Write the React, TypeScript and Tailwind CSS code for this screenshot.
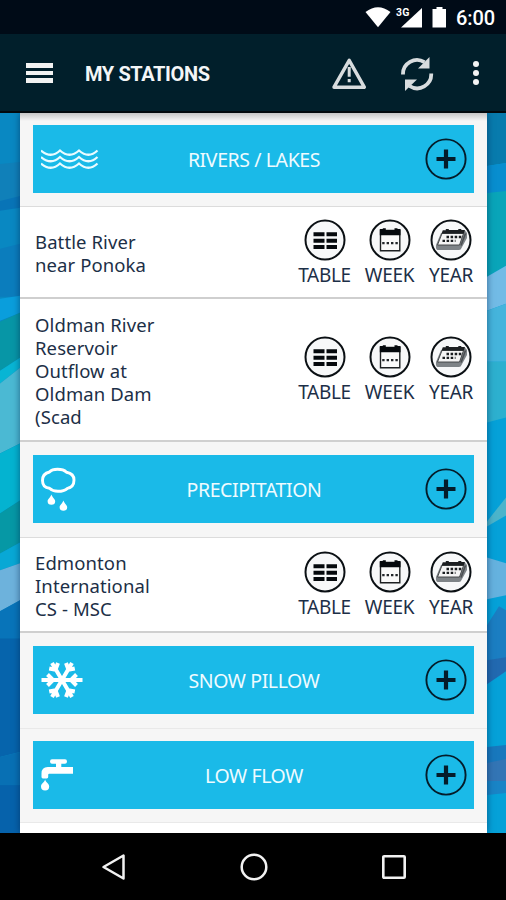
import React from "react";

type IconProps = { className?: string };

const Backdrop = () => (
  <svg
    className="absolute inset-0 h-full w-full"
    viewBox="0 112 506 721"
    preserveAspectRatio="none"
  >
    <g>
      <path d="M0 112h20v721H0z" fill="#0988c2" />
      <path d="M0 163l20-2v38L0 202z" fill="#1080b9" />
      <path d="M0 200l20-5v12L0 210z" fill="#0874b7" />
      <path d="M0 248l20-5v53H0z" fill="#0b7dbd" />
      <path d="M0 298l20-3v17L0 320z" fill="#0a9edc" />
      <path d="M0 321l20-9v45L0 370z" fill="#0796a6" />
      <path d="M0 370l20-13v10L0 383z" fill="#08b5d4" />
      <path d="M0 383l20-16v76L0 453z" fill="#4bb9d3" />
      <path d="M0 453l20-10v57L0 513z" fill="#04b3d0" />
      <path d="M0 513l20-13v42L0 553z" fill="#0698a5" />
      <path d="M0 553l20-11v21L0 570z" fill="#08a8d5" />
      <path d="M0 570l20-7v37L0 611z" fill="#6db2dc" />
      <path d="M0 611l20-11v38H0z" fill="#0874b9" />
      <path d="M0 638h20v114L0 757z" fill="#0664ac" />
      <path d="M0 757l20-5v33H0z" fill="#0870b4" />
      <path d="M0 785h20v48H0z" fill="#0662ab" />
    </g>
    <g>
      <path d="M487 112h19v721h-19z" fill="#05a1d8" />
      <path d="M487 112h19v50l-19 3z" fill="#087bad" />
      <path d="M487 165l19-3v29l-19 2z" fill="#088ecf" />
      <path d="M487 192l19-2v75l-19 11z" fill="#09a5b9" />
      <path d="M487 276l19-11v38l-19 7z" fill="#72bbe6" />
      <path d="M487 310l19-7v58h-19z" fill="#45b4dc" />
      <path d="M487 361h19v56l-19 5z" fill="#2db0cf" />
      <path d="M487 521l19-24v18l-19 11z" fill="#4bb4cb" />
      <path d="M487 557l19 6v32l-19 4z" fill="#65b2df" />
      <path d="M487 625l12-19 7 4v52h-19z" fill="#1b7ec2" />
      <path d="M487 660l19-3v14l-19 13z" fill="#2269b0" />
      <path d="M487 747l19-2v18h-19z" fill="#1878bd" />
      <path d="M487 763l19-4v22h-19z" fill="#3375b5" />
      <path d="M487 781h19v12l-19 2z" fill="#1984c6" />
    </g>
  </svg>
);

const StatusBar = () => (
  <div className="flex h-[34px] shrink-0 items-center justify-end bg-[#000b17] pr-[11px] text-white">
    <svg className="h-[22px] w-[82px]" viewBox="364 6 82 22" fill="#fff">
      <path d="M365.500 12Q378 2.500 390.500 12L378 27.200z" />
      <path d="M401 27.500h21V8z" />
      <text
        x="396"
        y="16"
        fontSize="10.500"
        fontWeight="700"
        className="font-['Roboto',sans-serif]"
        textLength="13.500"
        stroke="#000b17"
        strokeWidth="2"
        paintOrder="stroke"
      >
        3G
      </text>
      <path d="M432.500 9h4V7h6v2h4.500v18.500h-14.500z" />
    </svg>
    <span className="ml-[10px] w-[39px] whitespace-nowrap font-['Roboto',sans-serif] text-[20px] font-medium leading-[34px] tracking-[-0.1px] pt-[2px]">
      6:00
    </span>
  </div>
);

const AppBar = () => (
  <header className="flex h-[79px] shrink-0 items-center border-b-2 border-[#02090d] bg-[#011f2b] pl-[26px] pr-[27px]">
    <div className="flex w-[27px] flex-col gap-[3px] pt-[1px]">
      <span className="h-[4.500px] bg-[#f2f2f2]" />
      <span className="h-[4.500px] bg-[#f2f2f2]" />
      <span className="h-[4.500px] bg-[#f2f2f2]" />
    </div>
    <h1 className="ml-8 flex-1 whitespace-nowrap pt-[3px] font-['Roboto',sans-serif] text-[20px] font-bold tracking-[-0.4px] text-[#f4f6f7]">
      MY STATIONS
    </h1>
    <svg className="mt-[2px] h-8 w-9" viewBox="331 58 36 32" fill="none" stroke="#d8dcde">
      <path d="M349.200 60.300L364.300 87.200H334z" strokeWidth="3.400" strokeLinejoin="round" />
      <path d="M349.200 67v9.800M349.200 79v3.300" strokeWidth="3" />
    </svg>
    <svg className="ml-[33px] mt-[2px] h-9 w-[34px]" viewBox="400 56 34 36">
      <g fill="none" stroke="#d8dcde" strokeWidth="3.800">
        <path d="M403 74.500A14 14 0 0 1 424.500 62.200" />
        <path d="M431.200 73.500A14 14 0 0 1 409.500 86" />
      </g>
      <path d="M429.500 57v11.500H418z" fill="#d8dcde" />
      <path d="M405 91V79.500H417z" fill="#d8dcde" />
    </svg>
    <div className="ml-[39px] mt-[1px] flex flex-col gap-[2.500px]">
      <i className="size-[6.500px] rounded-full bg-[#f4f4f4]" />
      <i className="size-[6.500px] rounded-full bg-[#f4f4f4]" />
      <i className="size-[6.500px] rounded-full bg-[#f4f4f4]" />
    </div>
  </header>
);

const WavesIcon = () => (
  <svg className="h-[23px] w-[58px]" viewBox="0 0 58 23" fill="none" stroke="#e9fbff" strokeWidth="2.200">
    <path d="M0 2.500Q10 11 19 2.500Q28.500 11 38 2.500Q47.500 11 56.500 2.500" />
    <path d="M0 9Q10 17.500 19 9Q28.500 17.500 38 9Q47.500 17.500 56.500 9" />
    <path d="M0 15.500Q10 24 19 15.500Q28.500 24 38 15.500Q47.500 24 56.500 15.500" />
  </svg>
);

const RainIcon = () => (
  <svg className="h-11 w-9" viewBox="41 467 36 44">
    <path
      d="M49.500 472Q52 469.300 57.500 469.300Q63.500 469.300 66.500 472.200Q74 473.500 74 480Q74 487 67.500 488.300Q64 491.300 58 491.300Q52.500 491.300 49.500 488.300Q42.500 487.500 42.500 480.500Q42.500 473.500 49.500 472z"
      fill="none"
      stroke="#fff"
      strokeWidth="2.900"
      strokeLinejoin="round"
    />
    <path d="M51.400 494.500c1 3.200 3.800 4.500 3.800 6.700a3.800 3.500 0 0 1-7.600 0c0-2.200 2.800-3.500 3.800-6.700z" fill="#fff" />
    <path d="M63.400 500.500c1 3.200 3.800 4.500 3.800 6.700a3.800 3.500 0 0 1-7.600 0c0-2.200 2.800-3.500 3.800-6.700z" fill="#fff" />
  </svg>
);

const SnowIcon = () => (
  <svg
    className="h-[38px] w-[42px]"
    viewBox="-21 -19 42 38"
    fill="none"
    stroke="#fff"
    strokeWidth="4"
  >
    <path d="M-20.500 0h41M-14.500-5.500L-9 0l-5.500 5.500M14.500-5.500L9 0l5.500 5.500" />
    <path d="M-10-17L10 17M-12.800-11.500l6.300 1.300L-4-17M12.800 11.500L6.500 10.200L4 17" />
    <path d="M10-17L-10 17M12.800-11.500l-6.300 1.300L4-17M-12.800 11.500l6.300-1.300L-4 17" />
  </svg>
);

const TapIcon = () => (
  <svg className="h-8 w-8" viewBox="40.500 759 32 32" fill="#fff">
    <path d="M51.500 759.200q-2 0-2 2.300t2 2.300h4v3.300h-8.200q-6.300 0-6.300 6.500v3.500q0 1.400 1.400 1.400h3.900q1.400 0 1.400-1.400v-2.300q0-1 1-1h23.800v-6.700h-11.700v-3.300h3.700q2 0 2-2.300t-2-2.300z" />
    <path d="M44.600 779.500c.7 3.300 4.100 4 4.100 6.900a4.100 4 0 0 1-8.200 0c0-2.900 3.400-3.600 4.100-6.900z" />
  </svg>
);

const PlusIcon = () => (
  <svg className="size-[42px]" viewBox="0 0 42 42" fill="none" stroke="#041c2a">
    <circle cx="21" cy="21" r="19.600" strokeWidth="1.900" />
    <path d="M11.500 21h19M21 11.500v19" strokeWidth="4.200" />
  </svg>
);

const TableIcon = ({ className }: IconProps) => (
  <svg className={className} viewBox="0 0 42 42">
    <circle cx="21" cy="21" r="19.500" fill="#f7f8f9" stroke="#0b1014" strokeWidth="2" />
    <path
      d="M9.500 15.200h11M22.500 15.200h10.500M9.500 21.700h11M22.500 21.700h10.500M9.500 28h11M22.500 28h10.500"
      stroke="#05090d"
      strokeWidth="4"
    />
  </svg>
);

const WeekIcon = ({ className }: IconProps) => (
  <svg className={className} viewBox="0 0 42 42">
    <circle cx="21" cy="21" r="19.500" fill="#f7f8f9" stroke="#0b1014" strokeWidth="2" />
    <path d="M11.500 11.500h19.300v20.300H11.500z" fill="#fafafa" stroke="#1d2022" strokeWidth="1.400" />
    <path d="M10.800 10h3v-.8h3V11h8.700V9.200h3v.8h3v6.200H10.800z" fill="#05090d" />
    <path d="M13.200 24.200h15.800" stroke="#22262a" strokeWidth="2.200" strokeDasharray="2.400 2" />
  </svg>
);

const YearIcon = ({ className }: IconProps) => (
  <svg className={className} viewBox="0 0 42 42">
    <circle cx="21" cy="21" r="19.500" fill="#f7f8f9" stroke="#0b1014" strokeWidth="2" />
    <path d="M6 26L11 14L34.500 11L37 14V19L31.500 29Q31 31 29 31H7.500Q5.500 30.500 6 26z" fill="#7e8387" />
    <path d="M12 14.500h21.500L29.500 26H7.500z" fill="#f4f4f4" stroke="#3a3d40" strokeWidth="0.900" />
    <path d="M12.800 11.300h3V10h3v1h9.500v-1h3v1h3.500l-.8 3.600H11.500z" fill="#1b1e21" />
    <path d="M16.500 18h15M12.500 21.900h13" stroke="#1b1e21" strokeWidth="2.300" strokeDasharray="2.500 1.600" />
    <path d="M35.500 14.500L31 26.500" stroke="#4a4e51" strokeWidth="1.600" />
  </svg>
);

type SectionProps = {
  title: string;
  icon: React.ReactNode;
  className: string;
};

const Section = ({ title, icon, className }: SectionProps) => (
  <div className={`shrink-0 bg-[#f6f6f6] px-[13px] ${className}`}>
    <div className="grid h-[68px] grid-cols-[1fr_auto_1fr] items-center bg-[#1abae8] pl-2 pr-[7px]">
      {icon}
      <span className="whitespace-nowrap pt-[2px] text-[19.500px] tracking-[-0.4px] text-[#effbff]">{title}</span>
      <div className="justify-self-end">
        <PlusIcon />
      </div>
    </div>
  </div>
);

type StationProps = { name: string; className: string };

const Station = ({ name, className }: StationProps) => (
  <div className={`flex shrink-0 items-center justify-between bg-white pl-[15px] ${className}`}>
    <p className="w-[126px] pt-[2px] text-[18.500px] leading-[23px] tracking-[0.1px] text-[#1c2f47]">
      {name}
    </p>
    <div className="flex pr-[6.500px] pt-px text-[19px] leading-[23px] tracking-[-0.3px] text-[#1c2f47]">
      <div className="flex w-[66px] flex-col items-center">
        <TableIcon className="size-[42px]" />
        <span className="mt-[3px]">TABLE</span>
      </div>
      <div className="flex w-[64px] flex-col items-center">
        <WeekIcon className="size-[42px]" />
        <span className="mt-[3px]">WEEK</span>
      </div>
      <div className="flex w-[59px] flex-col items-center">
        <YearIcon className="size-[42px]" />
        <span className="mt-[3px]">YEAR</span>
      </div>
    </div>
  </div>
);

const NavBar = () => (
  <nav className="flex h-[67px] shrink-0 items-center justify-between bg-black pl-[101px] pr-[100px]">
    <svg className="h-7 w-6" viewBox="0 0 24 28" fill="none" stroke="#f2f2f2" strokeWidth="2.500">
      <path d="M22.500 2.500v23L2.500 14z" strokeLinejoin="round" />
    </svg>
    <svg className="size-7" viewBox="0 0 28 28" fill="none" stroke="#f2f2f2" strokeWidth="2.500">
      <circle cx="14" cy="14" r="12.300" />
    </svg>
    <svg className="size-6" viewBox="0 0 24 24" fill="none" stroke="#f2f2f2" strokeWidth="2.600">
      <rect x="1.300" y="1.300" width="21.400" height="21.400" rx="0.800" />
    </svg>
  </nav>
);

const App = () => {
  return (
    <div className="flex h-[900px] w-[506px] flex-col overflow-hidden bg-black font-['Noto_Sans','Open_Sans',sans-serif]">
      <StatusBar />
      <AppBar />
      <main className="relative h-[720px] shrink-0 overflow-hidden">
        <Backdrop />
        <div className="relative ml-5 flex h-full w-[467px] flex-col bg-white shadow-[0_0_7px_rgba(0,30,70,0.55)]">
          <Section
            title="RIVERS / LAKES"
            icon={<WavesIcon />}
            className="h-[94px] border-b border-[#dcdcdc] pt-3"
          />
          <Station name="Battle River near Ponoka" className="h-[92px] border-b-2 border-[#cfcfcf]" />
          <Station
            name="Oldman River Reservoir Outflow at Oldman Dam (Scad"
            className="h-[143px] border-b-2 border-[#d0d0d0]"
          />
          <Section
            title="PRECIPITATION"
            icon={<RainIcon />}
            className="h-[96px] border-b border-[#dcdcdc] pt-[13px]"
          />
          <Station
            name="Edmonton International CS - MSC"
            className="h-[95px] border-b-2 border-[#cfcfcf]"
          />
          <Section
            title="SNOW PILLOW"
            icon={<SnowIcon />}
            className="h-[96px] border-b border-[#e9e9e9] pt-[13px]"
          />
          <Section
            title="LOW FLOW"
            icon={<TapIcon />}
            className="h-[94px] border-b border-[#e9e9e9] pt-3"
          />
        </div>
        <div className="absolute left-5 top-0 h-2 w-[467px] bg-linear-to-b from-black/20 to-transparent" />
      </main>
      <NavBar />
    </div>
  );
};

export default App;
